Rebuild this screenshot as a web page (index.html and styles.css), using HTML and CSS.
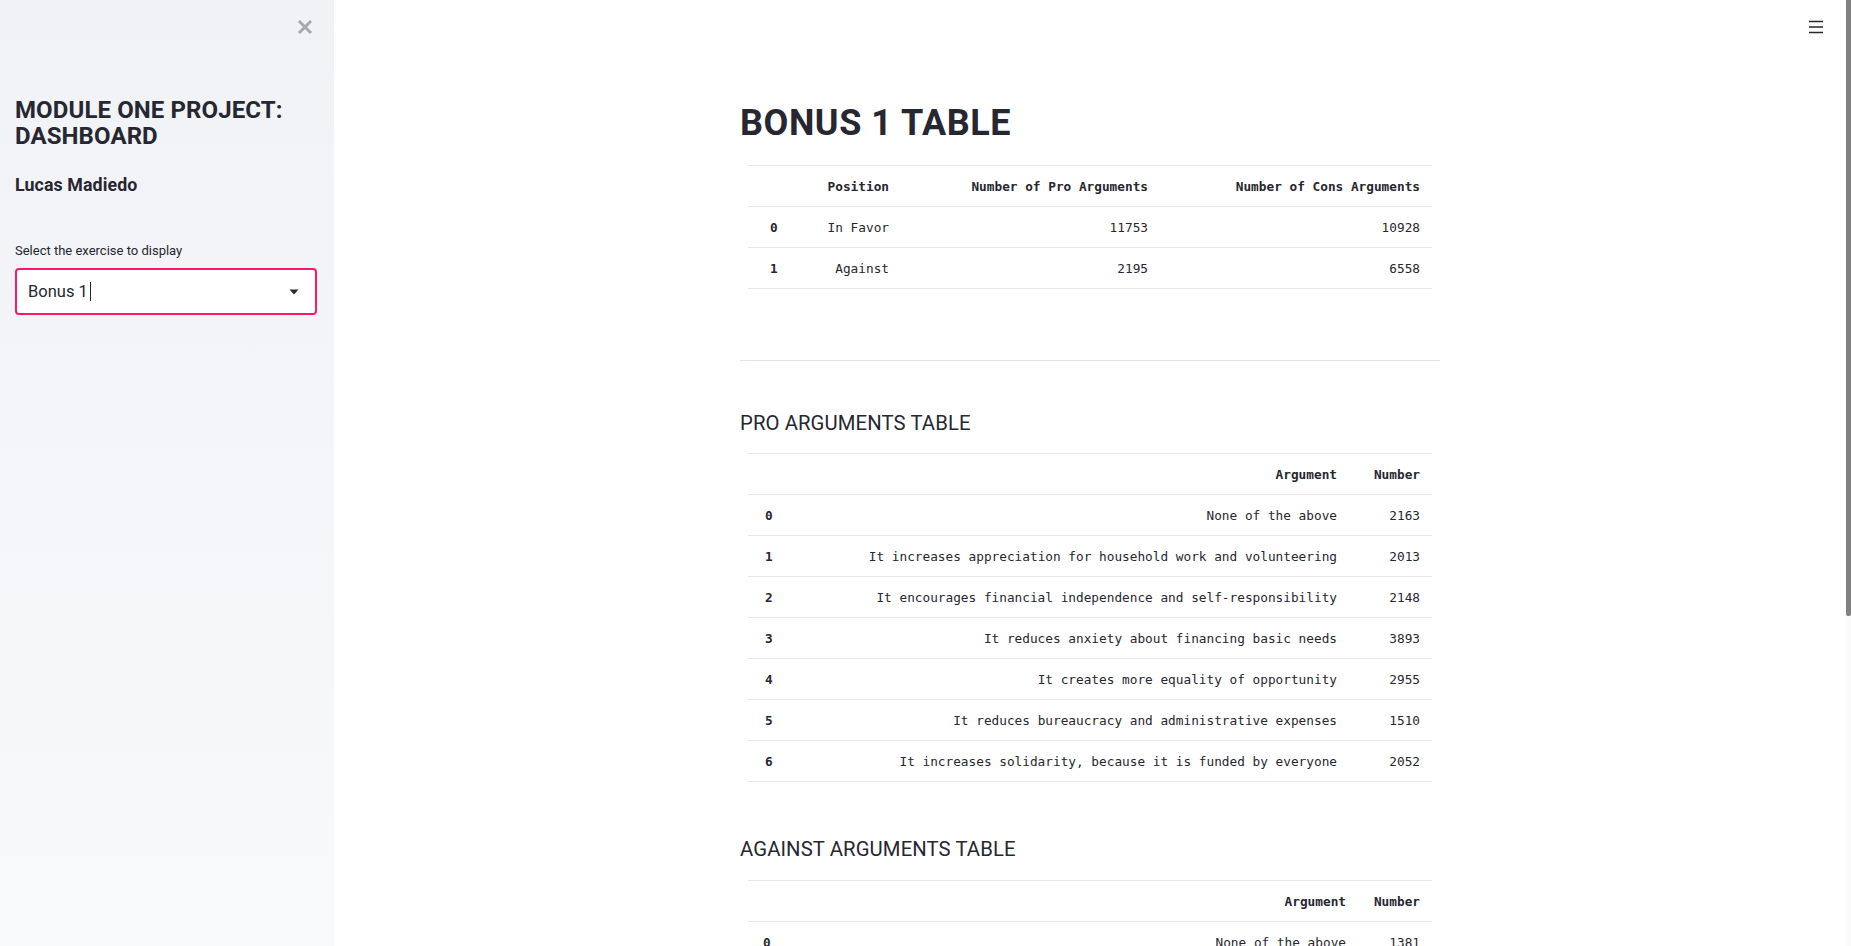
FILE: index.html
```html
<!DOCTYPE html>
<html lang="en">
<head>
<meta charset="utf-8">
<title>Module One Project: Dashboard</title>
<link rel="stylesheet" href="styles.css">
</head>
<body>
<div class="app">
  <aside class="sidebar">
    <div class="sidebar-top">
      <button class="close-btn" aria-label="Close sidebar">
        <svg width="24" height="24" viewBox="0 0 24 24"><path d="M6 6L18 18M18 6L6 18"/></svg>
      </button>
    </div>
    <h1 class="side-title">MODULE ONE PROJECT: DASHBOARD</h1>
    <h3 class="side-author">Lucas Madiedo</h3>
    <label class="side-label">Select the exercise to display</label>
    <div class="select">
      <span class="select-value">Bonus 1</span><span class="caret"></span>
      <svg class="select-arrow" width="10" height="6" viewBox="0 0 10 6"><path d="M0.5 0.5h9L5 5.5z"/></svg>
    </div>
  </aside>

  <main class="main">
    <div class="menu-btn">
      <svg width="14" height="14" viewBox="0 0 14 14"><path d="M0 1.5h14M0 7h14M0 12.5h14" stroke="#262730" stroke-width="1.6"/></svg>
    </div>
    <div class="content">
      <h1 class="page-title">BONUS 1 TABLE</h1>
      <table class="df df-bonus">
        <colgroup><col class="c-idx"><col class="c-pos"><col class="c-pro"><col></colgroup>
        <thead>
          <tr><th class="idx"></th><th>Position</th><th>Number of Pro Arguments</th><th>Number of Cons Arguments</th></tr>
        </thead>
        <tbody>
          <tr><td class="idx">0</td><td>In Favor</td><td>11753</td><td>10928</td></tr>
          <tr><td class="idx">1</td><td>Against</td><td>2195</td><td>6558</td></tr>
        </tbody>
      </table>

      <hr class="divider">

      <h3 class="sub-title">PRO ARGUMENTS TABLE</h3>
      <table class="df df-pro">
        <colgroup><col class="c-idx"><col><col class="c-num"></colgroup>
        <thead>
          <tr><th class="idx"></th><th>Argument</th><th>Number</th></tr>
        </thead>
        <tbody>
          <tr><td class="idx">0</td><td>None of the above</td><td>2163</td></tr>
          <tr><td class="idx">1</td><td>It increases appreciation for household work and volunteering</td><td>2013</td></tr>
          <tr><td class="idx">2</td><td>It encourages financial independence and self-responsibility</td><td>2148</td></tr>
          <tr><td class="idx">3</td><td>It reduces anxiety about financing basic needs</td><td>3893</td></tr>
          <tr><td class="idx">4</td><td>It creates more equality of opportunity</td><td>2955</td></tr>
          <tr><td class="idx">5</td><td>It reduces bureaucracy and administrative expenses</td><td>1510</td></tr>
          <tr><td class="idx">6</td><td>It increases solidarity, because it is funded by everyone</td><td>2052</td></tr>
        </tbody>
      </table>

      <h3 class="sub-title sub-title-gap">AGAINST ARGUMENTS TABLE</h3>
      <table class="df df-against">
        <colgroup><col class="c-idx"><col><col class="c-num"></colgroup>
        <thead>
          <tr><th class="idx"></th><th>Argument</th><th>Number</th></tr>
        </thead>
        <tbody>
          <tr><td class="idx">0</td><td>None of the above</td><td>1381</td></tr>
          <tr><td class="idx">1</td><td>It leads to a decrease in the willingness to work</td><td>1520</td></tr>
        </tbody>
      </table>
    </div>
  </main>

  <div class="scrollbar"><div class="scroll-thumb"></div></div>
</div>
</body>
</html>
```

FILE: styles.css
```css
* { box-sizing: border-box; }

html, body {
  margin: 0;
  height: 100%;
  overflow: hidden;
}

body {
  font-family: Roboto, "Noto Sans", sans-serif;
  color: #262730;
  background: #fff;
}

.app {
  display: flex;
  height: 100vh;
}

/* ---------- Sidebar ---------- */
.sidebar {
  flex: none;
  width: 334px;
  height: 100%;
  padding: 15px 17px 0 15px;
  background: linear-gradient(180deg, #f0f2f6 0%, #f8f9fa 100%);
  display: flex;
  flex-direction: column;
}

.sidebar-top {
  display: flex;
  justify-content: flex-end;
}

.close-btn {
  border: 0;
  padding: 0;
  background: none;
  width: 24px;
  height: 24px;
  cursor: pointer;
}

.close-btn svg {
  display: block;
  fill: none;
  stroke: #a6a9b1;
  stroke-width: 3;
}

.side-title {
  margin: 59px 0 0;
  font-size: 24px;
  line-height: 25.5px;
  font-weight: 700;
  letter-spacing: 0.1px;
  color: #262730;
}

.side-author {
  margin: 26px 0 0;
  font-size: 17.8px;
  line-height: 20px;
  font-weight: 700;
  letter-spacing: 0.1px;
}

.side-label {
  margin: 48px 0 0;
  font-size: 13px;
  line-height: 15px;
  display: block;
}

.select {
  margin-top: 10px;
  height: 47px;
  border: 2px solid #fb1a63;
  border-radius: 4px;
  background: #fff;
  display: flex;
  align-items: center;
  padding: 0 16px 0 11px;
}

.select-value {
  font-size: 16.5px;
  line-height: 20px;
}

.caret {
  display: inline-block;
  width: 1px;
  height: 19px;
  margin-left: 2px;
  background: #262730;
}

.select-arrow {
  margin-left: auto;
  fill: #262730;
}

/* ---------- Main ---------- */
.main {
  flex: 1;
  position: relative;
  overflow: hidden;
}

.menu-btn {
  position: absolute;
  top: 20px;
  right: 23px;
  width: 14px;
  height: 14px;
}

.menu-btn svg { display: block; }

.content {
  width: 700px;
  margin: 0 auto;
  padding-top: 102px;
}

.page-title {
  margin: 0 0 20px;
  font-size: 36px;
  line-height: 43px;
  font-weight: 700;
  letter-spacing: 0.55px;
}

.sub-title {
  margin: 50px 0 18px;
  font-size: 20.3px;
  line-height: 24px;
  font-weight: 400;
  letter-spacing: 0.1px;
}

.sub-title-gap { margin-top: 55px; margin-bottom: 19px; }

.divider {
  margin: 71px 0 0;
  border: 0;
  border-top: 1px solid #e3e5ec;
  height: 0;
}

/* ---------- Tables ---------- */
.df {
  width: calc(100% - 16px);
  margin: 0 8px;
  table-layout: fixed;
  border-collapse: separate;
  border-spacing: 0;
  border-top: 1px solid #e6e8ee;
  font-family: "DejaVu Sans Mono", "Liberation Mono", monospace;
  font-size: 12.75px;
  color: #262730;
}

.df th, .df td {
  height: 41px;
  padding: 0 12px 0 10px;
  border-bottom: 1px solid #e6e8ee;
  text-align: right;
  vertical-align: middle;
  white-space: nowrap;
  font-weight: 400;
}

.df th { font-weight: 700; }

.df .idx {
  text-align: left;
  font-weight: 700;
}

.df-bonus .c-idx { width: 50px; }
.df-bonus .c-pos { width: 103px; }
.df-bonus .c-pro { width: 259px; }
.df-bonus .idx { padding-left: 22px; }

.df-pro .c-idx { width: 52px; }
.df-pro .c-num { width: 83px; }
.df-pro .idx { padding-left: 17px; }

.df-against .c-idx { width: 52px; }
.df-against .c-num { width: 74px; }
.df-against .idx { padding-left: 15px; }

/* ---------- Scrollbar ---------- */
.scrollbar {
  flex: none;
  width: 5px;
  height: 100%;
  background: #fafafa;
}

.scroll-thumb {
  height: 616px;
  background: #808080;
  border-radius: 0 0 2px 2px;
}
```
